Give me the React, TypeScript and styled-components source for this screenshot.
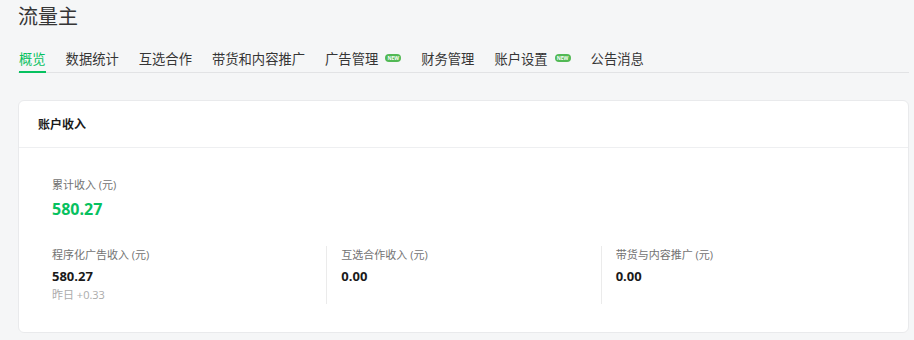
import React from "react";
import styled, { createGlobalStyle } from "styled-components";

const GlobalStyle = createGlobalStyle`
  html, body {
    margin: 0;
    padding: 0;
    background: #f5f6f7;
  }
  body {
    font-family: "Open Sans", "Noto Sans CJK SC", sans-serif;
    color: #333;
  }
`;

const Page = styled.div`
  padding: 0 5px 0 18px;
`;

const Title = styled.h1`
  margin: 0;
  padding-top: 3px;
  font-size: 20px;
  line-height: 28px;
  font-weight: 400;
  color: #353535;
`;

const TabBar = styled.nav`
  display: flex;
  gap: 20px;
  margin-top: 18px;
  padding-left: 1px;
  border-bottom: 1px solid #e2e3e5;
`;

const Tab = styled.div<{ $active?: boolean }>`
  display: flex;
  align-items: center;
  gap: 7px;
  padding-bottom: 2px;
  margin-bottom: -1px;
  font-size: 13.3px;
  line-height: 20px;
  color: ${p => (p.$active ? "#07c160" : "#353535")};
  border-bottom: 2px solid ${p => (p.$active ? "#07c160" : "transparent")};
  cursor: pointer;
`;

const NewBadge = styled.span`
  display: inline-flex;
  align-items: center;
  justify-content: center;
  width: 16px;
  height: 8px;
  margin-top: -2px;
  border-radius: 4px;
  background: #52b955;
  color: #fff;
  font-size: 5px;
  font-weight: 700;
  line-height: 8px;
`;

const Card = styled.section`
  margin-top: 27px;
  background: #fff;
  border: 1px solid #e9eaec;
  border-radius: 6px;
`;

const CardHeader = styled.header`
  height: 46px;
  padding-left: 19px;
  display: flex;
  align-items: center;
  border-bottom: 1px solid #eeeff1;
  font-size: 12px;
  font-weight: 700;
  color: #1a1a1a;
`;

const CardBody = styled.div`
  padding: 28px 33px 28px 33px;
`;

const Label = styled.div`
  font-size: 11px;
  line-height: 18px;
  color: #727272;
`;

const Total = styled.div`
  margin-top: 3px;
  font-size: 16px;
  line-height: 24px;
  font-weight: 700;
  color: #07c160;
`;

const Columns = styled.div`
  display: grid;
  grid-template-columns: repeat(3, 1fr);
  margin-top: 25px;
`;

const Column = styled.div<{ $first?: boolean }>`
  padding-left: ${p => (p.$first ? 0 : 14)}px;
  border-left: ${p => (p.$first ? "none" : "1px solid #ebebeb")};
`;

const Value = styled.div`
  margin-top: 2px;
  font-size: 13px;
  line-height: 20px;
  font-weight: 700;
  color: #1a1a1a;
`;

const Sub = styled.div`
  font-size: 11px;
  line-height: 18px;
  color: #ababab;
`;

const tabs = [
  { name: "概览", active: true },
  { name: "数据统计" },
  { name: "互选合作" },
  { name: "带货和内容推广" },
  { name: "广告管理", isNew: true },
  { name: "财务管理" },
  { name: "账户设置", isNew: true },
  { name: "公告消息" },
];

const income = [
  { label: "程序化广告收入 (元)", value: "580.27", sub: "昨日 +0.33" },
  { label: "互选合作收入 (元)", value: "0.00" },
  { label: "带货与内容推广 (元)", value: "0.00" },
];

export default function App() {
  return (
    <Page>
      <GlobalStyle />
      <Title>流量主</Title>
      <TabBar>
        {tabs.map(t => (
          <Tab key={t.name} $active={t.active}>
            {t.name}
            {t.isNew && <NewBadge>NEW</NewBadge>}
          </Tab>
        ))}
      </TabBar>
      <Card>
        <CardHeader>账户收入</CardHeader>
        <CardBody>
          <Label>累计收入 (元)</Label>
          <Total>580.27</Total>
          <Columns>
            {income.map((c, i) => (
              <Column key={c.label} $first={i === 0}>
                <Label>{c.label}</Label>
                <Value>{c.value}</Value>
                {c.sub && <Sub>{c.sub}</Sub>}
              </Column>
            ))}
          </Columns>
        </CardBody>
      </Card>
    </Page>
  );
}
